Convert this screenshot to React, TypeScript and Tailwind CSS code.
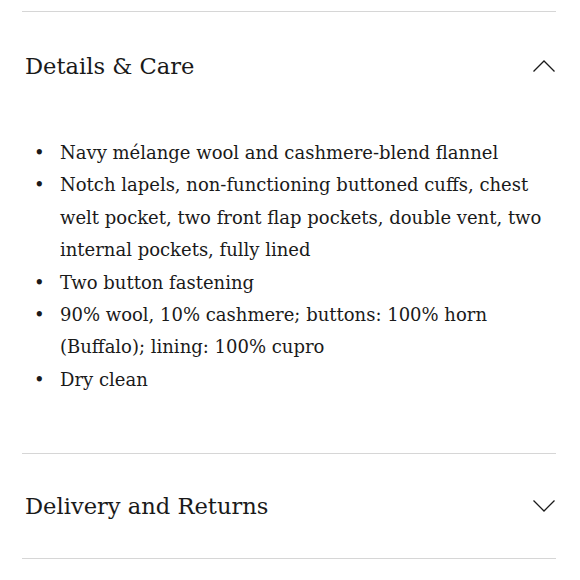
const items: string[] = [
  "Navy mélange wool and cashmere-blend flannel",
  "Notch lapels, non-functioning buttoned cuffs, chest welt pocket, two front flap pockets, double vent, two internal pockets, fully lined",
  "Two button fastening",
  "90% wool, 10% cashmere; buttons: 100% horn (Buffalo); lining: 100% cupro",
  "Dry clean",
];

function Chevron({ up }: { up: boolean }) {
  return (
    <svg width="24" height="14" viewBox="0 0 24 14" fill="none" className="text-[#1a1a1a]">
      <path
        d={up ? "M1.5 12.5 L12 2 L22.5 12.5" : "M1.5 1.5 L12 12 L22.5 1.5"}
        stroke="currentColor"
        strokeWidth="1.3"
      />
    </svg>
  );
}

export default function App() {
  return (
    <div className="h-[580px] w-[580px] bg-white pt-[11px] font-['DejaVu_Serif',Georgia,serif] text-[#1a1a1a]">
      <div className="ml-[22px] mr-[24px]">
        <section className="border-t border-[#d6d6d6]">
          <button className="flex h-[108px] w-full items-center justify-between pl-[3px] text-left">
            <span className="text-[22.6px] leading-none">Details &amp; Care</span>
            <Chevron up />
          </button>
          <ul className="mt-[17px] pb-[57px] text-[18px] leading-[32.4px]">
            {items.map((item) => (
              <li key={item} className="flex">
                <span className="w-[38px] shrink-0 pl-[12px]">•</span>
                <span>{item}</span>
              </li>
            ))}
          </ul>
        </section>
        <section className="border-y border-[#d6d6d6]">
          <button className="flex h-[104px] w-full items-center justify-between pl-[3px] text-left">
            <span className="text-[22.6px] leading-none">Delivery and Returns</span>
            <Chevron up={false} />
          </button>
        </section>
      </div>
    </div>
  );
}
